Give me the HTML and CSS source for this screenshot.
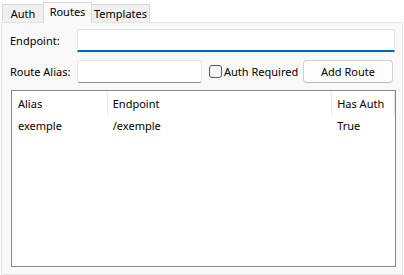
FILE: index.html
```html
<!DOCTYPE html>
<html>
<head>
<meta charset="utf-8">
<link rel="stylesheet" href="styles.css">
</head>
<body>
<div class="window">
  <div class="tabs">
    <div class="tab tab-auth">Auth</div>
    <div class="tab tab-routes active">Routes</div>
    <div class="tab tab-templates">Templates</div>
  </div>
  <div class="panel">
    <div class="row row-endpoint">
      <label class="lbl">Endpoint:</label>
      <div class="textbox textbox-focused"></div>
    </div>
    <div class="row row-alias">
      <label class="lbl">Route Alias:</label>
      <div class="textbox textbox-alias"></div>
      <div class="check">
        <span class="checkbox"></span>
        <span class="check-label">Auth Required</span>
      </div>
      <div class="button">Add Route</div>
    </div>
    <div class="listview">
      <div class="lv-header">
        <div class="col col-alias">Alias</div>
        <div class="col col-endpoint">Endpoint</div>
        <div class="col col-auth">Has Auth</div>
      </div>
      <div class="lv-row">
        <div class="col col-alias">exemple</div>
        <div class="col col-endpoint">/exemple</div>
        <div class="col col-auth">True</div>
      </div>
    </div>
  </div>
</div>
</body>
</html>
```
FILE: styles.css
```css
html, body {
  margin: 0;
  padding: 0;
  background: #ffffff;
}
body {
  font-family: "Noto Sans", "DejaVu Sans", sans-serif;
  font-size: 11px;
  color: #000000;
}
.window {
  width: 404px;
  height: 275px;
  display: flex;
  flex-direction: column;
}
.tabs {
  display: flex;
  align-items: flex-end;
  height: 22px;
  padding-left: 2px;
  box-sizing: border-box;
}
.tab {
  box-sizing: border-box;
  height: 18px;
  border: 1px solid #d9d9d9;
  border-bottom: none;
  background: #f0f0f0;
  display: flex;
  align-items: center;
  justify-content: center;
  line-height: 16px;
  padding-top: 1px;
}
.tab-auth {
  width: 41px;
  border-right: none;
}
.tab-routes {
  width: 49px;
}
.tab-templates {
  width: 58px;
  border-left: none;
}
.tab.active {
  height: 21px;
  background: #f9f9f9;
  margin-bottom: -1px;
  position: relative;
  z-index: 1;
  padding-top: 0;
  padding-bottom: 2px;
}
.panel {
  box-sizing: border-box;
  margin: 0 1px 0 1px;
  height: 253px;
  border: 1px solid #e3e3e3;
  background: #f9f9f9;
  padding: 6px 7px 7px 8px;
  display: flex;
  flex-direction: column;
}
.row {
  display: flex;
  align-items: center;
}
.lbl {
  width: 67px;
  flex: none;
  white-space: nowrap;
}
.textbox {
  box-sizing: border-box;
  height: 23px;
  background: #ffffff;
  border: 1px solid #e6e6e6;
  border-bottom: 1px solid #8a8a8a;
  border-radius: 3px;
}
.textbox-focused {
  flex: 1;
  border-bottom: 2px solid #0067c0;
  border-radius: 3px 3px 0 0;
}
.row-alias {
  margin-top: 8px;
}
.textbox-alias {
  width: 125px;
  height: 23px;
}
.check {
  display: flex;
  align-items: center;
  margin-left: 7px;
}
.checkbox {
  box-sizing: border-box;
  width: 13px;
  height: 13px;
  border: 1px solid #5a5a5a;
  border-radius: 3px;
  background: #f6f6f6;
  margin-right: 2px;
}
.check-label {
  white-space: nowrap;
}
.button {
  box-sizing: border-box;
  margin-left: auto;
  width: 90px;
  height: 23px;
  border: 1px solid #d0d0d0;
  border-bottom-color: #b8b8b8;
  border-radius: 4px;
  background: #fdfdfd;
  display: flex;
  align-items: center;
  justify-content: center;
  margin-right: 2px;
}
.listview {
  box-sizing: border-box;
  margin-top: 7px;
  margin-left: 1px;
  margin-right: -1px;
  flex: 1;
  border: 1px solid #828790;
  background: #ffffff;
}
.lv-header, .lv-row {
  display: flex;
}
.lv-header {
  height: 24px;
}
.lv-row {
  height: 20px;
}
.col {
  box-sizing: border-box;
  padding-left: 5px;
  display: flex;
  align-items: center;
  white-space: nowrap;
}
.lv-header .col {
  border-right: 1px solid #e5e5e5;
  margin-top: 1px;
}
.col-alias {
  width: 96px;
}
.col-endpoint {
  width: 225px;
}
.col-auth {
  width: 63px;
}
.lv-header .col-alias, .lv-row .col-alias {
  padding-left: 6px;
}
```
